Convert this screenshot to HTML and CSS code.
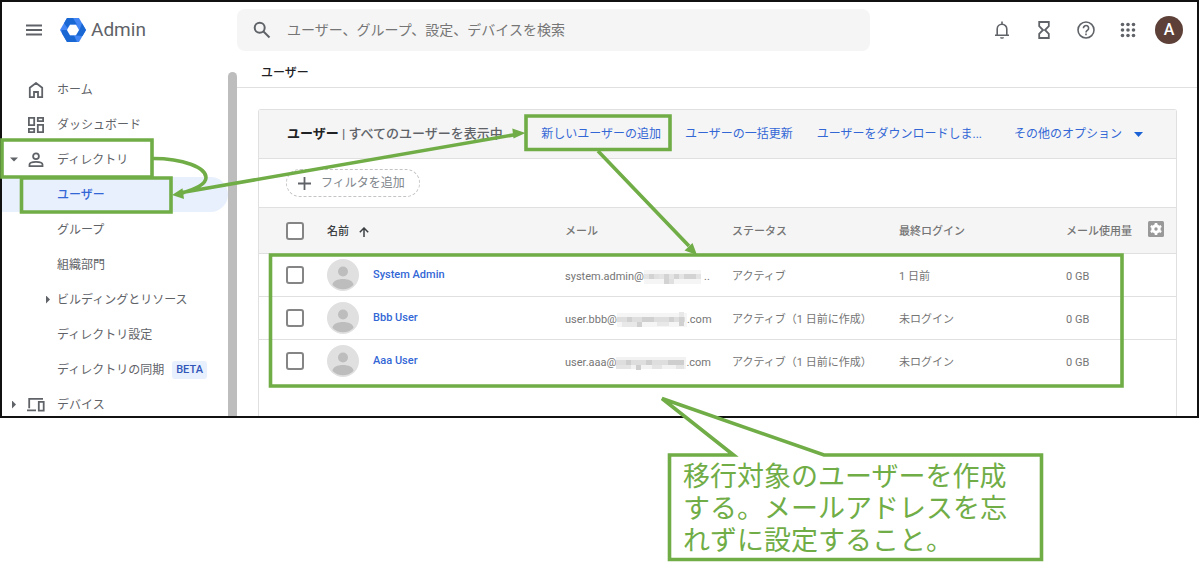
FILE: index.html
```html
<!DOCTYPE html>
<html lang="ja">
<head>
<meta charset="utf-8">
<title>ユーザー - Admin</title>
<link rel="stylesheet" href="styles.css">
</head>
<body>
<div class="app">
  <header class="topbar">
    <div class="brand">
      <button class="icon-btn" aria-label="メニュー"><svg width="16" height="12" viewBox="0 0 16 12"><path d="M0 1.500h16M0 6h16M0 10.500h16" stroke="#5f6368" stroke-width="1.800"/></svg></button>
      <a class="logo" href="#">
        <svg width="26" height="24" viewBox="0 0 26 24">
          <path d="M7 0h12l7 12-7 12H7L0 12z" fill="#4285f4"/>
          <path d="M7 0h6l4 6.500h-7L7.500 10 4 5.200zM26 12l-3.500 6L15 17.500l4.500-5.500L22 5.200zM7 24l-5-8.500L1.500 12h5.200L10 17.500h4L17 24z" fill="#1967d2"/>
          <path d="M10 6.800h6l3 5.200-3 5.200h-6L7 12z" fill="#fff"/>
        </svg>
        <span>Admin</span>
      </a>
    </div>
    <label class="search">
      <svg width="18" height="18" viewBox="0 0 18 18" fill="none" stroke="#5f6368" stroke-width="2"><circle cx="6.700" cy="6.700" r="5"/><path d="M10.500 10.500l6 6"/></svg>
      <input type="search" aria-label="検索" placeholder="ユーザー、グループ、設定、デバイスを検索">
    </label>
    <div class="tools">
      <button class="icon-btn" aria-label="通知"><svg width="16" height="18" viewBox="0 0 16 18" fill="none" stroke="#5f6368" stroke-width="1.600"><path d="M1 14.200h14M3.200 14V8a4.800 4.800 0 0 1 9.600 0v6M8 3V.6"/><path d="M6 16.200h4a2 1.500 0 0 1-4 0z" fill="#5f6368" stroke="none"/></svg></button>
      <button class="icon-btn" aria-label="タスク"><svg width="12" height="18" viewBox="0 0 12 18" fill="none" stroke="#5f6368" stroke-width="1.800"><path d="M1.200 1h9.600v4.200L7 9l3.800 3.800V17H1.200v-4.200L5 9 1.200 5.200z"/></svg></button>
      <button class="icon-btn" aria-label="ヘルプ"><svg width="18" height="18" viewBox="0 0 18 18" fill="none" stroke="#5f6368" stroke-width="1.600"><circle cx="9" cy="9" r="8"/><path d="M6.400 7.200a2.600 2.600 0 1 1 4.200 2C9.600 10 9 10.300 9 11.400M9 12.600v1.600"/></svg></button>
      <button class="icon-btn" aria-label="アプリ"><svg width="16" height="16" viewBox="0 0 16 16" fill="#5f6368"><circle cx="2.500" cy="2.500" r="1.800"/><circle cx="8" cy="2.500" r="1.800"/><circle cx="13.500" cy="2.500" r="1.800"/><circle cx="2.500" cy="8" r="1.800"/><circle cx="8" cy="8" r="1.800"/><circle cx="13.500" cy="8" r="1.800"/><circle cx="2.500" cy="13.500" r="1.800"/><circle cx="8" cy="13.500" r="1.800"/><circle cx="13.500" cy="13.500" r="1.800"/></svg></button>
      <button class="account" aria-label="アカウント">A</button>
    </div>
  </header>

  <div class="body">
    <aside class="sidebar">
      <nav class="nav">
        <a href="#"><i></i><svg width="16" height="16" viewBox="0 0 16 16" fill="none" stroke="#5f6368" stroke-width="1.800"><path d="M1.800 15.200V5.800L8 1l6.200 4.800v9.400H10V10H6v5.200z"/></svg>ホーム</a>
        <a href="#"><i></i><svg width="16" height="16" viewBox="0 0 16 16" fill="none" stroke="#5f6368" stroke-width="1.800"><path d="M.9.900h5.300v7.300H.9zM9.800.900h5.300v3.300H9.800zM9.800 7.800h5.300v7.300H9.800zM.9 11.800h5.300v3.300H.9z"/></svg>ダッシュボード</a>
        <a href="#"><i class="open"></i><svg width="16" height="16" viewBox="0 0 16 16" fill="none" stroke="#5f6368" stroke-width="1.800"><circle cx="8" cy="4.300" r="2.900"/><path d="M1.500 14.200v-1.600C1.500 10.700 5 9.800 8 9.800s6.500.9 6.500 2.800v1.600z"/></svg>ディレクトリ</a>
        <a href="#" class="sub current">ユーザー</a>
        <a href="#" class="sub">グループ</a>
        <a href="#" class="sub">組織部門</a>
        <a href="#" class="nested"><i class="closed"></i>ビルディングとリソース</a>
        <a href="#" class="sub">ディレクトリ設定</a>
        <a href="#" class="sub">ディレクトリの同期<span class="beta">BETA</span></a>
        <a href="#"><i class="closed"></i><svg width="18" height="16" viewBox="0 0 18 16" fill="none" stroke="#5f6368" stroke-width="1.800"><path d="M16 1.800H2.200v9.400M0 13.400h9M11.800 4.800h4.900v8.900h-4.900z"/></svg>デバイス</a>
      </nav>
      <div class="scrollbar"></div>
    </aside>

    <main class="main">
      <div class="crumb">ユーザー</div>
      <section class="card">
        <div class="card-head">
          <h1><b>ユーザー</b> | すべてのユーザーを表示中</h1>
          <div class="actions">
            <a href="#">新しいユーザーの追加</a>
            <a href="#">ユーザーの一括更新</a>
            <a href="#">ユーザーをダウンロードしま...</a>
            <button class="more">その他のオプション<svg width="9" height="5" viewBox="0 0 9 5"><path d="M0 0h9L4.500 5z" fill="#1a62d6"/></svg></button>
          </div>
        </div>
        <div class="filters">
          <button class="chip"><svg width="13" height="13" viewBox="0 0 13 13"><path d="M6.500 0v13M0 6.500h13" stroke="#5f6368" stroke-width="1.800"/></svg>フィルタを追加</button>
        </div>
        <table class="users">
          <colgroup><col class="c-check"><col><col class="c-data"><col class="c-data"><col class="c-data"><col class="c-usage"><col class="c-gear"></colgroup>
          <thead>
            <tr>
              <th class="check"><input type="checkbox" aria-label="すべて選択"></th>
              <th class="sorted"><span class="name">名前<svg width="10" height="10" viewBox="0 0 10 10" fill="none" stroke="#3c4043" stroke-width="1.500"><path d="M5 10V1M.8 5.200L5 1l4.200 4.200"/></svg></span></th>
              <th>メール</th><th>ステータス</th><th>最終ログイン</th><th>メール使用量</th>
              <th class="gear"><button class="icon-btn" aria-label="列の設定"><svg width="16" height="16" viewBox="0 0 16 16"><rect width="16" height="16" rx="1.500" fill="#999"/><circle cx="8" cy="8" r="3.200" fill="none" stroke="#fff" stroke-width="3"/><path d="M8 2v2M8 12v2M2.800 5l1.700 1M11.500 10l1.700 1M2.800 11l1.700-1M11.500 6l1.700-1" stroke="#fff" stroke-width="2.600"/></svg></button></th>
            </tr>
          </thead>
          <tbody>
            <tr>
              <td class="check"><input type="checkbox" aria-label="System Admin"></td>
              <td class="person"><span class="name"><svg class="face" width="32" height="32" viewBox="0 0 32 32"><circle cx="16" cy="16" r="16" fill="#e0e0e0"/><circle cx="16" cy="12.500" r="5" fill="#bdbdbd"/><path d="M5.500 26c0-8 21-8 21 0a15 15 0 0 1-21 0z" fill="#bdbdbd"/></svg><a href="#">System Admin</a></span></td>
              <td><span class="mail">system.admin@<svg class="mask" width="60" height="16" viewBox="0 0 60 16"><path fill="#f5f5f5" d="M0 1h57v14H0z"/><path fill="#e4e4e4" d="M0 5h57v5H0z"/><path fill="#d3d3d3" d="M5 5h5v5H5zM20 5h5v10h-5zM30 5h5v5h-5zM40 5h12v5H40z"/><path fill="#e0e0e0" d="M10 5h5v5h-5zM25 10h5v5h-5z"/></svg>..</span></td>
              <td>アクティブ</td><td>1 日前</td><td>0 GB</td><td></td>
            </tr>
            <tr>
              <td class="check"><input type="checkbox" aria-label="Bbb User"></td>
              <td class="person"><span class="name"><svg class="face" width="32" height="32" viewBox="0 0 32 32"><circle cx="16" cy="16" r="16" fill="#e0e0e0"/><circle cx="16" cy="12.500" r="5" fill="#bdbdbd"/><path d="M5.500 26c0-8 21-8 21 0a15 15 0 0 1-21 0z" fill="#bdbdbd"/></svg><a href="#">Bbb User</a></span></td>
              <td><span class="mail">user.bbb@<svg class="mask" width="70" height="16" viewBox="0 0 70 16"><path fill="#f5f5f5" d="M0 1h70v14H0z"/><path fill="#dedede" d="M0 5h68v5H0z"/><path fill="#d0d0d0" d="M10 5h5v5h-5zM25 5h12v5H25zM20 10h5v5h-5zM52 5h5v5h-5zM62 5h5v9h-5z"/><path fill="#e8e8e8" d="M5 10h15v5H5zM40 10h12v4H40zM62 0h5v5h-5z"/></svg>.com</span></td>
              <td>アクティブ（1 日前に作成）</td><td>未ログイン</td><td>0 GB</td><td></td>
            </tr>
            <tr>
              <td class="check"><input type="checkbox" aria-label="Aaa User"></td>
              <td class="person"><span class="name"><svg class="face" width="32" height="32" viewBox="0 0 32 32"><circle cx="16" cy="16" r="16" fill="#e0e0e0"/><circle cx="16" cy="12.500" r="5" fill="#bdbdbd"/><path d="M5.500 26c0-8 21-8 21 0a15 15 0 0 1-21 0z" fill="#bdbdbd"/></svg><a href="#">Aaa User</a></span></td>
              <td><span class="mail">user.aaa@<svg class="mask" width="70" height="16" viewBox="0 0 70 16"><path fill="#f2f2f2" d="M0 2h70v12H0z"/><path fill="#dedede" d="M0 5h68v5H0z"/><path fill="#cecece" d="M10 5h5v5h-5zM30 5h6v5h-6zM20 10h5v5h-5zM52 5h16v5H52z"/><path fill="#e4e4e4" d="M0 10h15v4H0zM36 10h10v4H36zM60 10h8v4h-8z"/></svg>.com</span></td>
              <td>アクティブ（1 日前に作成）</td><td>未ログイン</td><td>0 GB</td><td></td>
            </tr>
          </tbody>
        </table>
      </section>
    </main>
  </div>
</div>

<div class="notes">
  <svg width="1200" height="572" viewBox="0 0 1200 572" fill="none" stroke="#70ad47" stroke-width="3.600">
    <path d="M2 140h150v37H2zM21.500 178h149.500v34H21.500zM526 116h144v33.500H526zM270.500 255h851.500v131H270.500z"/>
    <path d="M153 158.500c30 0 53 9 53 19 0 7-10 11-25 16M182 192.500L516 134.500M598 151L689 246"/>
    <path d="M172 195l10.500-6.700 1.500 10.700zM525.500 133l-12 5.500-1.200-10zM697 255l-12.500-4.500 8-7.500z" fill="#70ad47" stroke="none"/>
    <path d="M669.500 455H733.500L662 398.500L824 455h217.500v104.500h-372z" fill="#fff"/>
  </svg>
  <p class="callout">移行対象のユーザーを作成する。メールアドレスを忘れずに設定すること。</p>
</div>
</body>
</html>
```

FILE: styles.css
```css
* { box-sizing: border-box; }

body {
  margin: 0;
  position: relative;
  min-height: 100vh;
  background: #fff;
  color: #5f6368;
  font: 12px/18px Roboto, "Noto Sans CJK JP", sans-serif;
}

a { color: inherit; text-decoration: none; }

button {
  padding: 0;
  border: 0;
  background: none;
  color: inherit;
  font: inherit;
}

svg { flex: none; }

.icon-btn { display: flex; align-items: center; justify-content: center; }

/* Window */
.app {
  display: flex;
  flex-direction: column;
  height: 73vh;
  margin-right: 1px;
  border: 2px solid #111;
  overflow: hidden;
}

.topbar {
  display: flex;
  flex: none;
  align-items: center;
  height: 56px;
  padding-right: 14px;
}

.brand {
  display: flex;
  flex: none;
  align-items: center;
  gap: 18px;
  width: 235px;
  padding-left: 24px;
}

.logo {
  display: flex;
  align-items: center;
  gap: 5px;
  font-size: 19px;
  line-height: 24px;
}

.search {
  display: flex;
  flex: 0 1 633px;
  align-items: center;
  gap: 16px;
  height: 42px;
  padding: 0 16px;
  border-radius: 8px;
  background: #f5f5f5;
}

.search input {
  flex: 1;
  min-width: 0;
  padding: 0;
  border: 0;
  outline: 0;
  background: none;
  font: 14px/20px Roboto, "Noto Sans CJK JP", sans-serif;
}

.search input::placeholder { color: #757575; opacity: 1; }

.tools { display: flex; align-items: center; margin-left: auto; }
.tools .icon-btn { width: 42px; height: 42px; }

.account {
  width: 28px;
  height: 28px;
  margin-left: 6px;
  border-radius: 50%;
  background: #5d4037;
  color: #fff;
  font-size: 16px;
  font-weight: 500;
}

.body { display: flex; flex: 1; min-height: 0; }

/* Sidebar */
.sidebar {
  display: flex;
  flex: none;
  width: 235px;
  padding-top: 14px;
  overflow: hidden;
}

.nav { flex: 1; }

.nav a {
  display: flex;
  align-items: center;
  height: 35px;
}

.nav i {
  width: 25px;
  height: 8px;
  flex: none;
}

.nav i + svg { width: 18px; margin-right: 12px; }
.nav .open { background: #5f6368; clip-path: polygon(8px 2px, 16px 2px, 12px 6px); }
.nav .closed { background: #5f6368; clip-path: polygon(10px 0, 14px 4px, 10px 8px); }
.nav .sub { padding-left: 55px; }
.nav .nested { padding-left: 34px; }
.nav .nested i { width: 21px; }

.nav .current {
  border-radius: 0 18px 18px 0;
  background: #e8f0fe;
  color: #3367d6;
  font-weight: 500;
}

.beta {
  margin-left: 8px;
  padding: 0 4px;
  border-radius: 3px;
  background: #e8f0fe;
  color: #3155b8;
  font-size: 11px;
  font-weight: 500;
}

.scrollbar {
  width: 9px;
  border-radius: 5px 5px 0 0;
  background: #bdbdbd;
}

/* Content */
.main {
  display: flex;
  flex: 1;
  flex-direction: column;
  min-width: 0;
}

.crumb {
  flex: none;
  padding: 6px 24px 5px;
  border-bottom: 1px solid #e0e0e0;
  color: #202124;
  font-weight: 500;
}

.card {
  flex: 1;
  margin: 21px 20px 0 21px;
  border: 1px solid #e0e0e0;
  border-bottom: 0;
  border-radius: 3px 3px 0 0;
}

.card-head {
  display: flex;
  align-items: center;
  justify-content: space-between;
  height: 49px;
  padding: 0 33px 0 28px;
  border-bottom: 1px solid #e0e0e0;
  background: #f5f5f5;
}

h1 {
  margin: 0;
  font-size: 13px;
  font-weight: 500;
  line-height: 20px;
  white-space: nowrap;
}

h1 b { color: #202124; font-weight: 700; }

.actions {
  display: flex;
  gap: 24px;
  color: #3367d6;
  white-space: nowrap;
}

.more { display: flex; align-items: center; gap: 12px; margin-left: 8px; }

.filters { display: flex; align-items: center; height: 48px; padding-left: 27px; }

.chip {
  display: flex;
  align-items: center;
  gap: 10px;
  height: 28px;
  padding: 0 14px 0 11px;
  border: 1px dashed #c4c4c4;
  border-radius: 14px;
  color: #80868b;
}

.users {
  width: 100%;
  table-layout: fixed;
  border-collapse: collapse;
  color: #757575;
  font-size: 11px;
  text-align: left;
}

.c-check { width: 68px; }
.c-data { width: 167px; }
.c-usage { width: 81px; }
.c-gear { width: 29px; }

.users tr { height: 43px; }
.users thead tr { height: 46px; background: #f5f5f5; border-top: 1px solid #e0e0e0; }
.users tbody tr { border-top: 1px solid #e0e0e0; }
.users th, .users td { padding: 3px 0 0; white-space: nowrap; }
.users th { font-weight: 500; }
.users .sorted { color: #3c4043; }
.users .check { padding: 0 0 0 27px; }
.users .person { padding: 0; }
.users .gear { padding: 0 0 3px 1px; }

.users input {
  display: block;
  appearance: none;
  width: 18px;
  height: 18px;
  margin: 0;
  border: 2px solid #858585;
  border-radius: 3px;
  background: #fff;
}

.name { display: flex; align-items: center; gap: 10px; }
.face + a { margin-left: 4px; color: #3367d6; font-weight: 500; }
.mail { display: flex; align-items: center; }

/* Annotations drawn over the window */
.notes { position: absolute; top: 0; left: 0; pointer-events: none; }
.notes svg { display: block; }

.callout {
  position: absolute;
  top: 461px;
  left: 683px;
  width: 330px;
  margin: 0;
  color: #70ad47;
  font-size: 27px;
  line-height: 32px;
}
```
